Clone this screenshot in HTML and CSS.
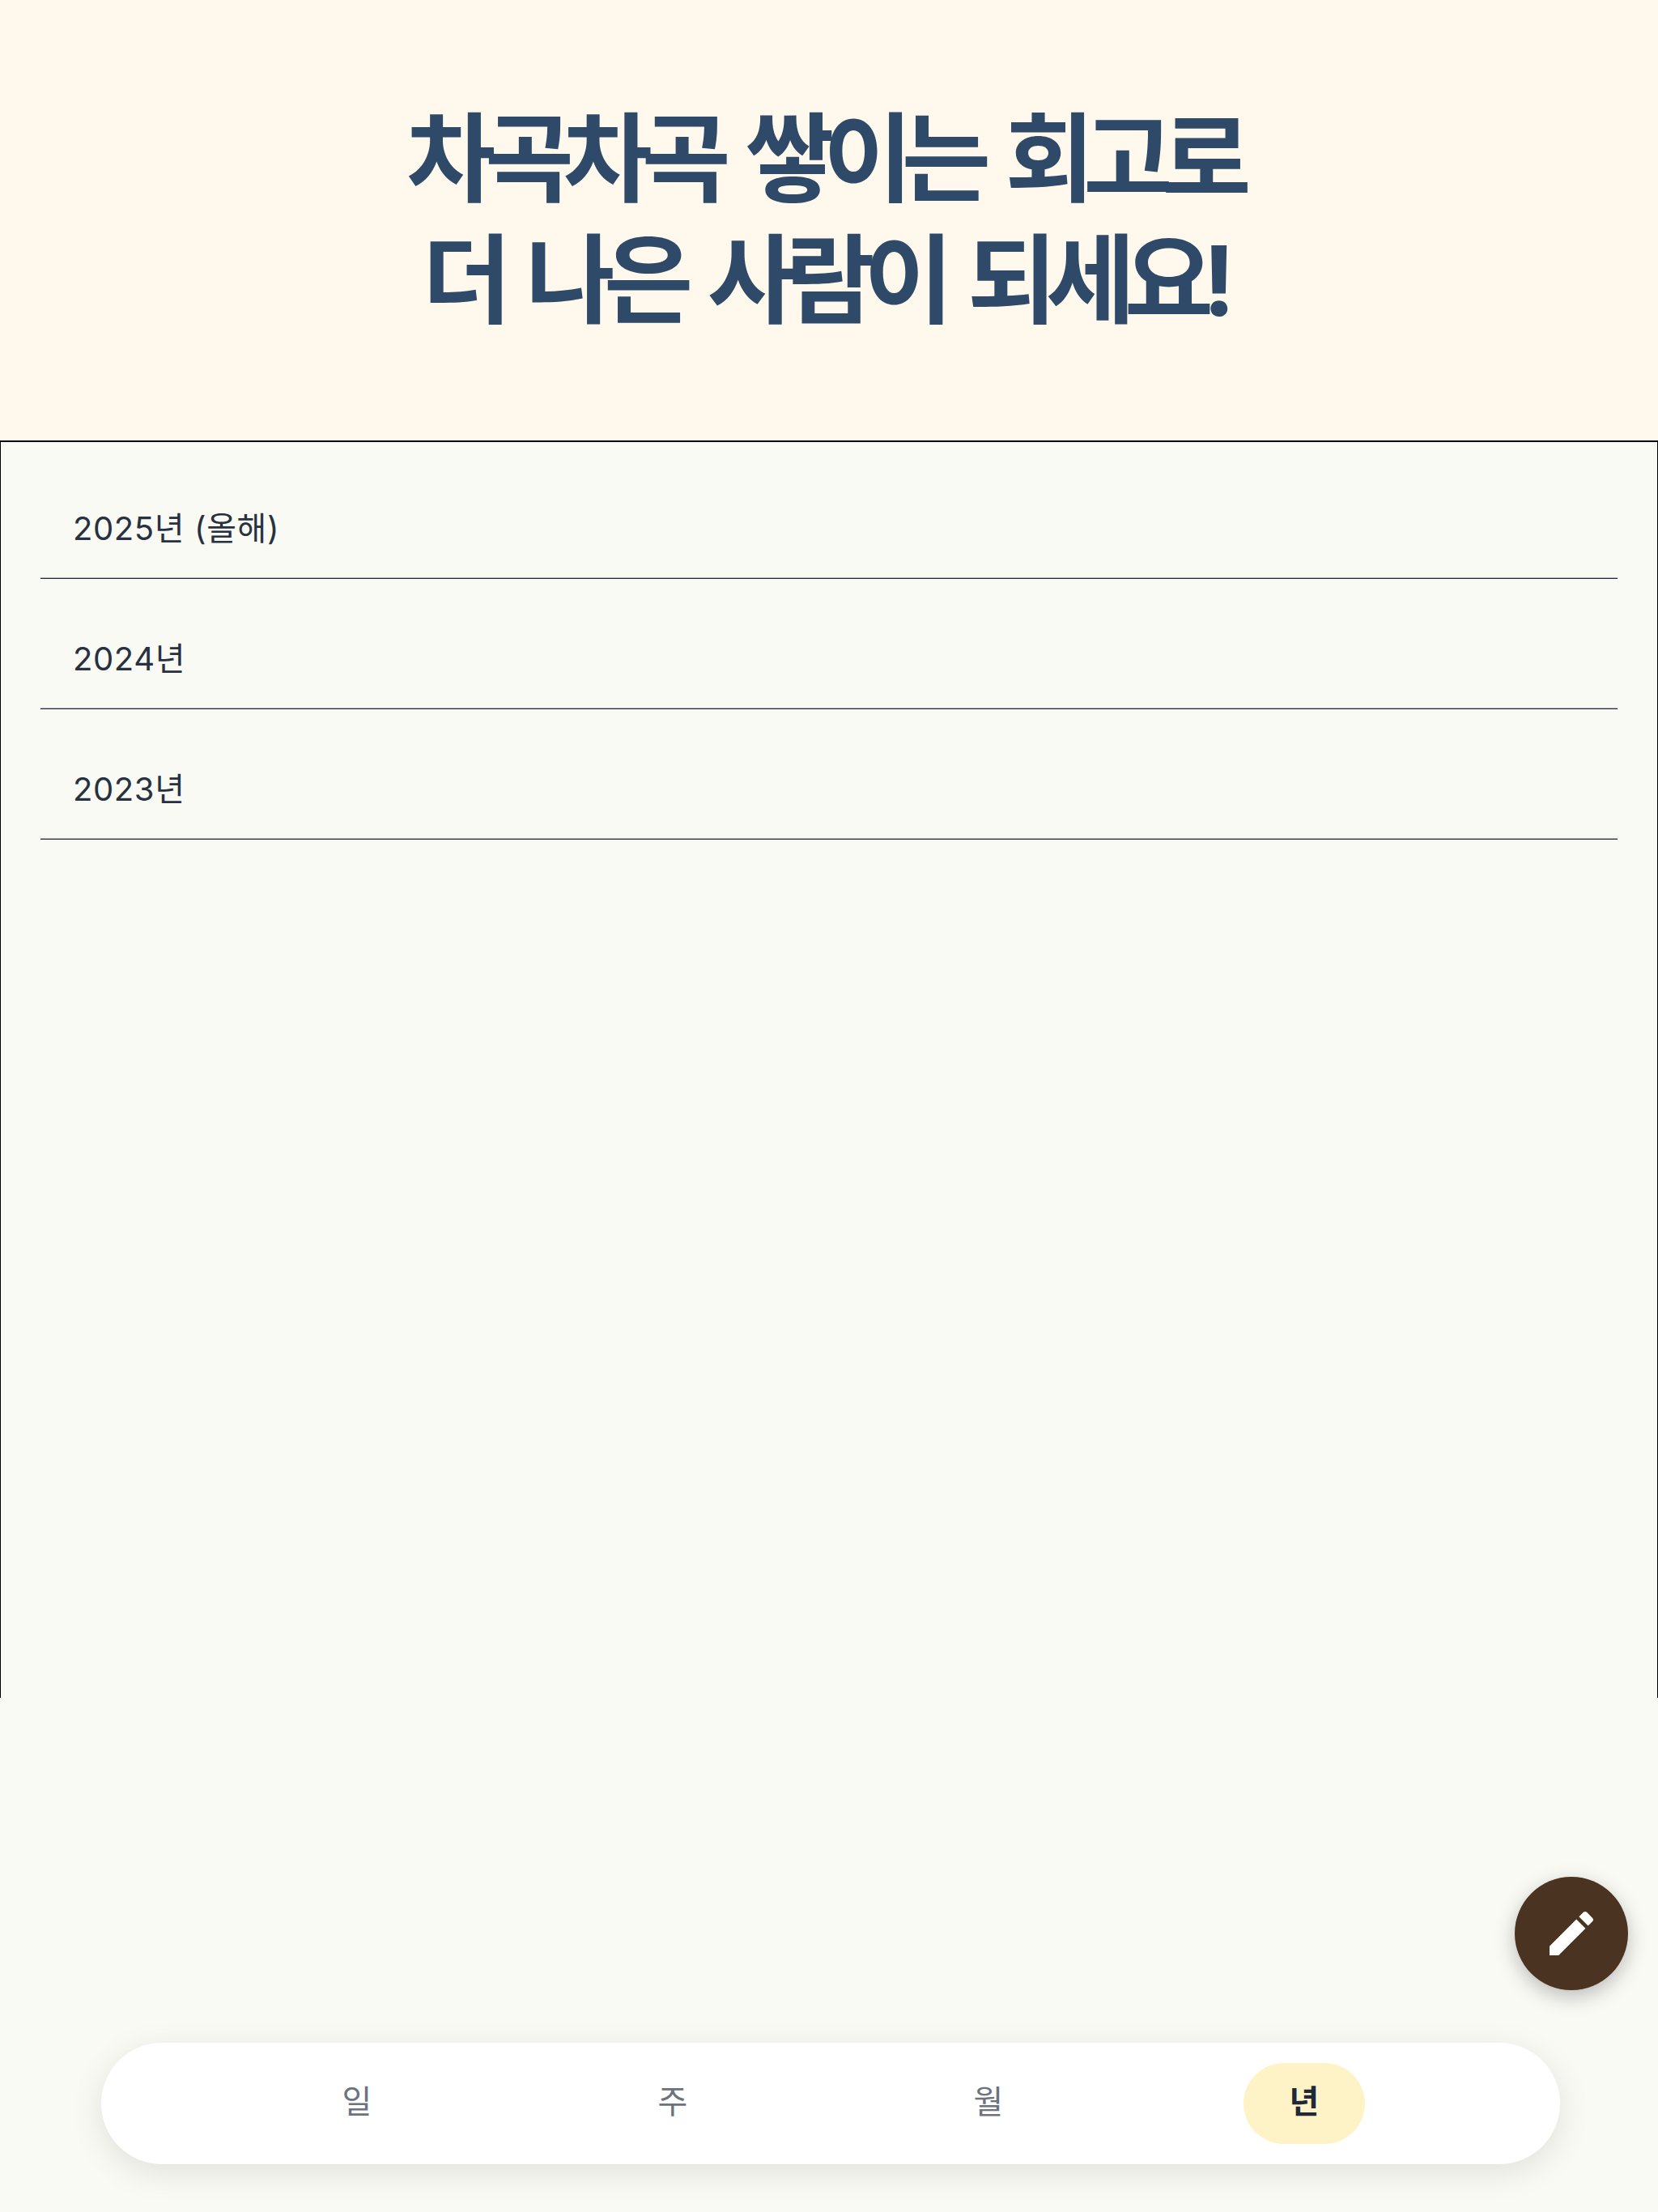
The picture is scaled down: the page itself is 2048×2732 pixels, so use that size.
FILE: index.html
```html
<!DOCTYPE html>
<html lang="ko">
<head>
<meta charset="utf-8">
<title>회고</title>
<link rel="stylesheet" href="styles.css">
</head>
<body>
<div class="page">
  <header class="hero">
    <h1 class="hero-title">차곡차곡 쌓이는 회고로<br>더 나은 사람이 되세요!</h1>
  </header>
  <main class="years">
    <div class="year-row">2025년 (올해)</div>
    <div class="year-row">2024년</div>
    <div class="year-row">2023년</div>
  </main>
  <button class="fab" aria-label="작성">
    <svg class="fab-icon" viewBox="0 0 24 24"><path d="M3 17.25V21h3.75L17.81 9.94l-3.75-3.75L3 17.25zM20.71 7.04c.39-.39.39-1.02 0-1.41l-2.34-2.34c-.39-.39-1.02-.39-1.41 0l-1.83 1.83 3.75 3.75 1.83-1.83z"/></svg>
  </button>
  <nav class="tabs">
    <span class="tab">일</span>
    <span class="tab">주</span>
    <span class="tab">월</span>
    <span class="tab tab-active">년</span>
  </nav>
</div>
</body>
</html>
```
FILE: styles.css
```css
* { box-sizing: border-box; }
html, body { margin: 0; padding: 0; }
body {
  background: #fafaf5;
  font-family: Inter, "Noto Sans CJK KR", sans-serif;
}
.page {
  position: relative;
  width: 2048px;
  height: 2732px;
  overflow: hidden;
}
.hero {
  height: 544px;
  padding-right: 14px;
  background: #fff9ed;
  display: flex;
  align-items: center;
  justify-content: center;
}
.hero-title {
  margin: 0;
  font-size: 120px;
  line-height: 150px;
  font-weight: 700;
  letter-spacing: -0.113em;
  word-spacing: 16px;
  text-align: center;
  color: #2f4a68;
}
.years {
  height: 1553px;
  border: 1px solid #000;
  border-top-width: 2px;
  border-bottom: 0;
  padding: 8px 49px 0;
}
.year-row {
  margin-top: 36px;
  padding: 33px 40px 31px;
  font-size: 40px;
  line-height: 60px;
  letter-spacing: 0.015em;
  color: #273140;
  border-bottom: 1px solid #1f2937;
  box-shadow: inset 0 -1px 0 #b4b7ba;
}
.fab {
  position: absolute;
  left: 1871px;
  top: 2318px;
  width: 140px;
  height: 140px;
  padding: 0;
  border: 0;
  border-radius: 50%;
  background: #4a3320;
  box-shadow: 0 8px 24px rgba(0, 0, 0, 0.25);
  display: flex;
  align-items: center;
  justify-content: center;
}
.fab-icon { width: 72px; height: 72px; fill: #fff; }
.tabs {
  position: absolute;
  left: 125px;
  top: 2523px;
  width: 1802px;
  height: 150px;
  padding: 0 121px;
  border-radius: 75px;
  background: #fff;
  box-shadow: 0 10px 40px rgba(0, 0, 0, 0.1);
  display: flex;
  align-items: center;
  justify-content: space-around;
}
.tab {
  width: 150px;
  height: 100px;
  padding-bottom: 10px;
  border-radius: 50px;
  display: flex;
  align-items: center;
  justify-content: center;
  font-size: 40px;
  color: #6b7280;
}
.tab-active {
  background: #fef3c7;
  color: #1f2937;
  font-weight: 700;
}
```
